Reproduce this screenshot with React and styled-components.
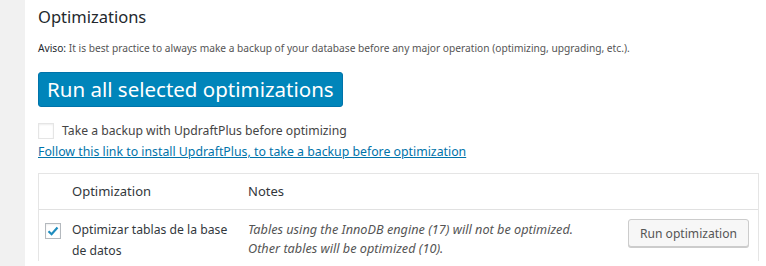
import React from 'react';
import styled, {createGlobalStyle} from 'styled-components';

const GlobalStyle = createGlobalStyle`
body {
  margin: 0;
  background: #f1f1f1;
  font-family: "Noto Sans", "Open Sans", sans-serif;
  color: #444;
}
`;

const Wrap = styled.div`
margin-left: 25px;
background: #fff;
min-height: 266px;
padding: 0 7px 0 13px;
`;

const Title = styled.h2`
margin: 0;
padding-top: 5px;
font-size: 16.5px;
font-weight: 400;
line-height: 24px;
color: #23282d;
`;

const Notice = styled.p`
margin: 11px 0 0;
font-size: 10.2px;
line-height: 16px;
color: #555;
`;

const Strong = styled.span`
color: #23282d;
`;

const BigButton = styled.button`
margin-top: 16px;
height: 35px;
padding: 0 8px;
background: #0085ba;
border: 1px solid #0073aa;
border-radius: 3px;
color: #fff;
font-family: inherit;
font-size: 20.5px;
line-height: 33px;
`;

const CheckRow = styled.div`
margin-top: 15px;
display: flex;
align-items: center;
gap: 8px;
font-size: 12.2px;
line-height: 18px;
`;

const Box = styled.span`
display: inline-flex;
align-items: center;
justify-content: center;
width: 16px;
height: 16px;
box-sizing: border-box;
border: 1px solid ${p => (p.checked ? '#b4b9be' : '#e5e5e5')};
box-shadow: inset 0 1px 2px rgba(0, 0, 0, 0.07);
background: #fff;
flex-shrink: 0;
`;

const Link = styled.a`
display: block;
margin-top: 3px;
font-size: 12.3px;
line-height: 18px;
color: #0073aa;
text-decoration: underline;
`;

const Table = styled.div`
margin-top: 12px;
border: 1px solid #e5e5e5;
border-bottom: none;
font-size: 13px;
`;

const HeadRow = styled.div`
display: grid;
grid-template-columns: 33px 176px 1fr;
height: 35px;
align-items: center;
border-bottom: 1px solid #e1e1e1;
color: #32373c;
`;

const BodyRow = styled.div`
display: grid;
grid-template-columns: 33px 176px 1fr auto;
padding-top: 9px;
align-items: start;
`;

const Cell = styled.div`
font-size: ${p => (p.small ? '12.2px' : '13px')};
line-height: 21px;
padding-right: 16px;
color: #32373c;
`;

const Notes = styled.div`
font-size: 12.7px;
font-style: italic;
line-height: 19px;
color: #555;
padding-top: 1px;
`;

const CheckCell = styled.div`
padding: 4px 0 0 6px;
`;

const SmallButton = styled.button`
margin: 0 9px 0 0;
height: 28px;
padding: 0 11px;
background: #f7f7f7;
border: 1px solid #ccc;
border-radius: 3px;
box-shadow: 0 1px 0 #ccc;
color: #555;
font-family: inherit;
font-size: 12.1px;
`;

const Tick = () => (
    <svg width="14" height="14" viewBox="0 0 14 14">
        <path d="M2.5 7.2 L5.6 10.2 L11.5 3.6" fill="none" stroke="#1e8cbe" strokeWidth="2.2"/>
    </svg>
);

const App = () => {
    return (
        <>
            <GlobalStyle/>
            <Wrap>
                <Title>Optimizations</Title>
                <Notice>
                    <Strong>Aviso:</Strong> It is best practice to always make a backup of your database before any major operation (optimizing, upgrading, etc.).
                </Notice>
                <BigButton>Run all selected optimizations</BigButton>
                <CheckRow>
                    <Box/>
                    <span>Take a backup with UpdraftPlus before optimizing</span>
                </CheckRow>
                <Link href="#">Follow this link to install UpdraftPlus, to take a backup before optimization</Link>
                <Table>
                    <HeadRow>
                        <span/>
                        <Cell>Optimization</Cell>
                        <Cell>Notes</Cell>
                    </HeadRow>
                    <BodyRow>
                        <CheckCell><Box checked><Tick/></Box></CheckCell>
                        <Cell small>Optimizar tablas de la base de datos</Cell>
                        <Notes>
                            Tables using the InnoDB engine (17) will not be optimized.<br/>
                            Other tables will be optimized (10).
                        </Notes>
                        <SmallButton>Run optimization</SmallButton>
                    </BodyRow>
                </Table>
            </Wrap>
        </>
    );
};

export default App;
